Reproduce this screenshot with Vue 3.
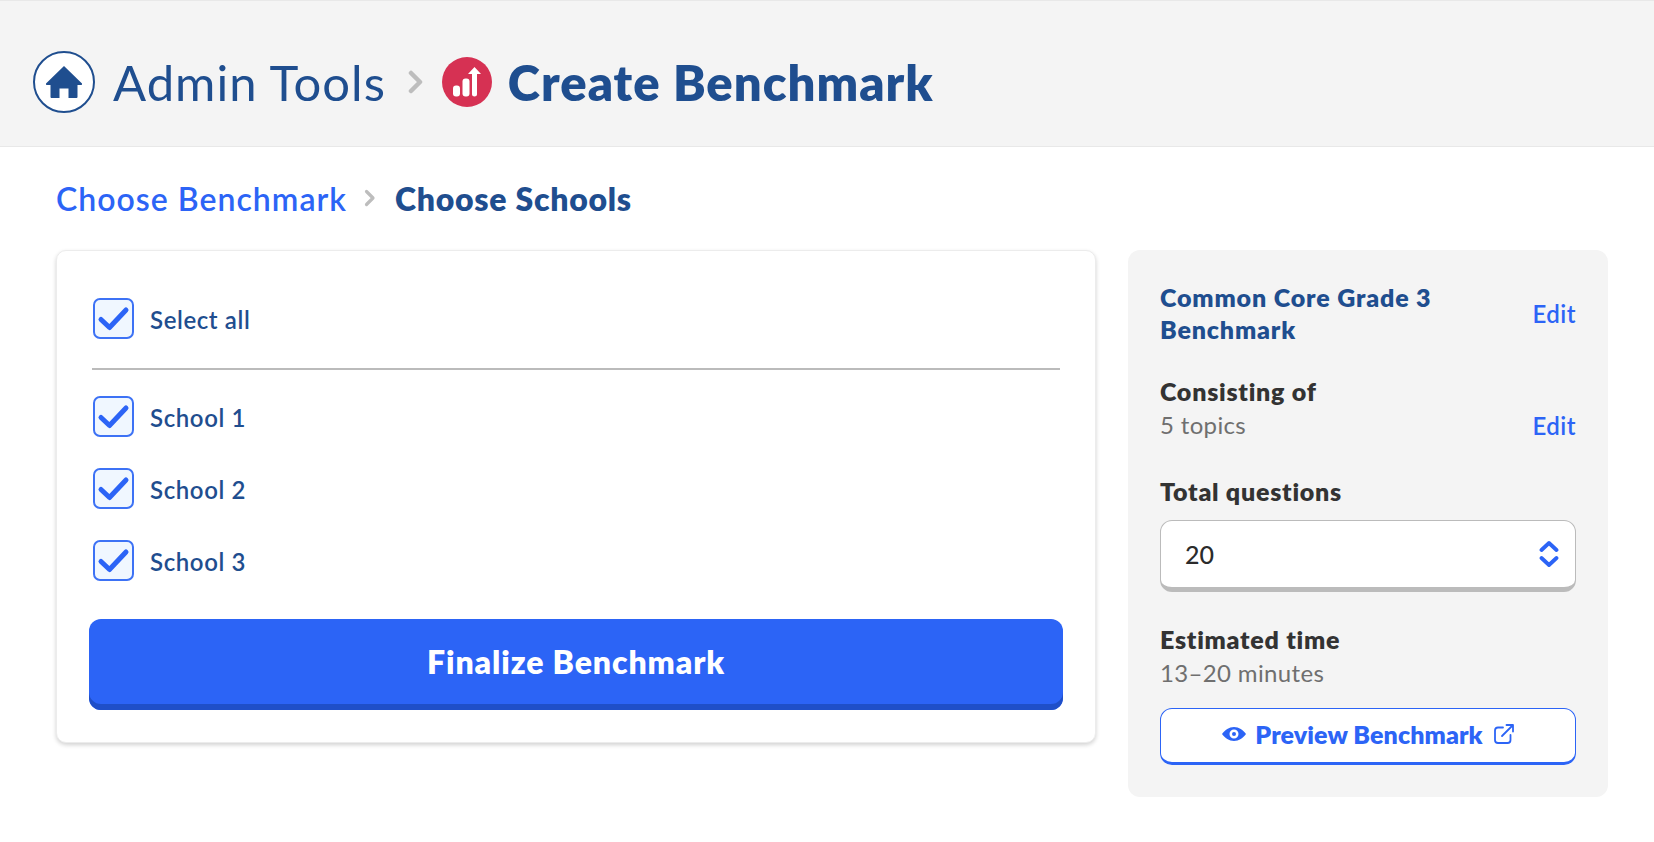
<script setup>
const schools = ['School 1', 'School 2', 'School 3']
</script>

<template>
  <div class="page">
    <header class="top">
      <span class="home">
        <svg viewBox="0 0 40 40" width="40" height="40"><path d="M20 4 L38 21.5 Q38.5 23 37 23 H33.5 V35 Q33.500 36 32.500 36 H24.500 V26.500 H15.500 V36 H7.500 Q6.500 36 6.500 35 V23 H3 Q1.500 23 2 21.500 Z" fill="#1f4e8f"/></svg>
      </span>
      <span class="admin">Admin Tools</span>
      <svg class="chev" viewBox="0 0 15 24" width="15" height="24"><path d="M3 3 L12 12 L3 21" fill="none" stroke="#bdbdbd" stroke-width="4.500" stroke-linecap="round" stroke-linejoin="round"/></svg>
      <span class="red">
        <svg viewBox="0 0 50 50" width="50" height="50" fill="#fff">
          <rect x="11" y="28.500" width="7" height="11" rx="3"/>
          <rect x="20.500" y="21.500" width="7" height="18" rx="3"/>
          <path d="M30 17 H26 L32.500 10 L39 17 H35 V37.500 Q35 39.500 32.500 39.500 Q30 39.500 30 37.500 Z"/>
        </svg>
      </span>
      <h1 class="title">Create Benchmark</h1>
    </header>

    <nav class="crumbs">
      <a class="crumb-link">Choose Benchmark</a>
      <svg class="crumb-chev" viewBox="0 0 12 18" width="12" height="18"><path d="M2.500 2.500 L9 9 L2.500 15.500" fill="none" stroke="#bdbdbd" stroke-width="3.200" stroke-linecap="round" stroke-linejoin="round"/></svg>
      <span class="crumb-cur">Choose Schools</span>
    </nav>

    <main class="content">
      <section class="card">
        <label class="row first">
          <span class="box"><svg viewBox="0 0 41 41" width="41" height="41"><path d="M8 21.500 L16.500 29.500 L33 12" fill="none" stroke="#2c64f6" stroke-width="5" stroke-linecap="round" stroke-linejoin="round"/></svg></span>
          <span class="lbl">Select all</span>
        </label>
        <hr class="rule" />
        <label v-for="s in schools" :key="s" class="row">
          <span class="box"><svg viewBox="0 0 41 41" width="41" height="41"><path d="M8 21.500 L16.500 29.500 L33 12" fill="none" stroke="#2c64f6" stroke-width="5" stroke-linecap="round" stroke-linejoin="round"/></svg></span>
          <span class="lbl">{{ s }}</span>
        </label>
        <button class="finalize">Finalize Benchmark</button>
      </section>

      <aside class="side">
        <div class="name-row">
          <div class="name">Common Core Grade 3 Benchmark</div>
          <a class="edit">Edit</a>
        </div>
        <div class="consist">
          <div>
            <div class="head">Consisting of</div>
            <div class="sub">5 topics</div>
          </div>
          <a class="edit low">Edit</a>
        </div>
        <div class="head total">Total questions</div>
        <div class="select">
          <span>20</span>
          <svg viewBox="0 0 20 28" width="20" height="28"><path d="M2.500 10 L10 3 L17.500 10 M2.500 18 L10 25 L17.500 18" fill="none" stroke="#2c64f6" stroke-width="3.800" stroke-linecap="round" stroke-linejoin="round"/></svg>
        </div>
        <div class="head est">Estimated time</div>
        <div class="sub">13–20 minutes</div>
        <button class="preview">
          <svg viewBox="0 0 24 16" width="24" height="16"><path fill-rule="evenodd" d="M12 1 C17 1 21 4 24 8 C21 12 17 15 12 15 C7 15 3 12 0 8 C3 4 7 1 12 1 Z M12 3.500 A4.500 4.500 0 1 0 12 12.500 A4.500 4.500 0 1 0 12 3.500 Z M12 6 A2 2 0 1 1 12 10 A2 2 0 1 1 12 6 Z" fill="#2c64f6"/></svg>
          <span>Preview Benchmark</span>
          <svg class="ext" viewBox="0 0 20 20" width="20" height="20"><path d="M9 3.500 H4 Q1 3.500 1 6.500 V16 Q1 19 4 19 H13.500 Q16.500 19 16.500 16 V11 M8 12 L18.500 1.500 M12.500 1 H19 V7.500" fill="none" stroke="#2c64f6" stroke-width="1.800" stroke-linecap="round" stroke-linejoin="round"/></svg>
        </button>
      </aside>
    </main>
  </div>
</template>

<style scoped>
.page { width: 1654px; height: 842px; background: #fff; font-family: "Lato", "Open Sans", sans-serif; overflow: hidden; }
.top { background: #f4f4f4; border-top: 1px solid #e8e8e8; border-bottom: 1px solid #e8e8e8; display: flex; align-items: center; padding: 17px 0 0 33px; height: 128px; }
.home { width: 58px; height: 58px; border: 2px solid #1f4e8f; border-radius: 50%; background: #fff; display: flex; align-items: center; justify-content: center; }
.admin { margin-left: 18px; font-size: 49px; color: #1f4e8f; letter-spacing: 1px; }
.chev { margin-left: 22px; }
.red { margin-left: 19px; width: 50px; height: 50px; border-radius: 50%; background: #d63153; display: block; }
.red svg { display: block; }
.title { margin: 0 0 0 16px; font-size: 49px; font-weight: 800; color: #1f4e8f; letter-spacing: 1px; }
.crumbs { display: flex; align-items: center; padding: 32px 0 0 56px; height: 38px; font-size: 32px; }
.crumb-link { color: #2c64f6; font-weight: 600; letter-spacing: 1.02px; }
.crumb-chev { margin-left: 17px; }
.crumb-cur { margin-left: 19px; color: #1f4e8f; font-weight: 800; letter-spacing: 0.72px; }
.content { display: flex; align-items: flex-start; padding: 33px 0 0 56px; gap: 32px; }
.card { box-sizing: border-box; width: 1040px; height: 493px; border: 1px solid #ececec; border-radius: 10px; box-shadow: 0 2px 4px rgba(0,0,0,.18); padding: 47px 32px 0 32px; background: #fff; }
.row { display: flex; align-items: center; height: 41px; margin: 0 0 31px 4px; }
.row.first { margin-bottom: 0; }
.box { box-sizing: border-box; width: 41px; height: 41px; border: 2px solid #3d72f5; border-radius: 7px; background: #f0f7ff; position: relative; }
.box svg { position: absolute; left: -2px; top: -2px; }
.lbl { margin-left: 16px; padding-top: 2px; font-size: 24px; font-weight: 600; color: #1f4e8f; letter-spacing: 0.6px; }
.rule { border: 0; height: 2px; background: #bbb; margin: 29px 2px 26px 3px; width: 968px; }
.finalize { display: block; width: 974px; height: 91px; margin: 38px 0 0 0; border: 0; border-radius: 12px; background: #2c64f6; box-shadow: inset 0 -6px 0 #1f4fc8; color: #fff; font: 800 32px "Lato", sans-serif; letter-spacing: 0.9px; padding: 0 0 6px; }
.side { box-sizing: border-box; width: 480px; height: 547px; background: #f4f4f4; border-radius: 12px; padding: 32px 32px 0; }
.name-row { display: flex; align-items: center; justify-content: space-between; }
.name { width: 310px; font-size: 25px; line-height: 31.500px; font-weight: 800; color: #1f4e8f; letter-spacing: 0.85px; }
.edit { font-size: 24px; color: #2c64f6; font-weight: 600; letter-spacing: 0.5px; }
.consist { display: flex; justify-content: space-between; align-items: flex-end; margin-top: 30px; }
.edit.low { line-height: 35px; }
.head { font-size: 25px; line-height: 32px; font-weight: 800; color: #333; letter-spacing: 0.75px; }
.sub { font-size: 24px; line-height: 36px; color: #6f6f6f; letter-spacing: 0.35px; }
.total { margin-top: 32px; }
.select { box-sizing: border-box; margin-top: 13px; height: 72px; border: 1.500px solid #bbb; border-bottom-width: 5px; border-radius: 12px; background: #fff; display: flex; align-items: center; justify-content: space-between; padding: 0 16px 0 24px; font-size: 25px; font-weight: 500; color: #2b2b2b; }
.est { margin-top: 31px; margin-bottom: 0; }
.preview { box-sizing: border-box; display: flex; align-items: center; justify-content: center; gap: 9px; width: 416px; height: 57px; margin-top: 17px; border: 1.500px solid #2c64f6; border-bottom-width: 3px; border-radius: 12px; background: #fff; color: #2c64f6; font: 800 25px "Lato", sans-serif; letter-spacing: 0.1px; padding: 0 0 3px; }
.ext { margin-left: 2px; }
</style>
<style>
html, body { margin: 0; background: #fff; }
</style>
